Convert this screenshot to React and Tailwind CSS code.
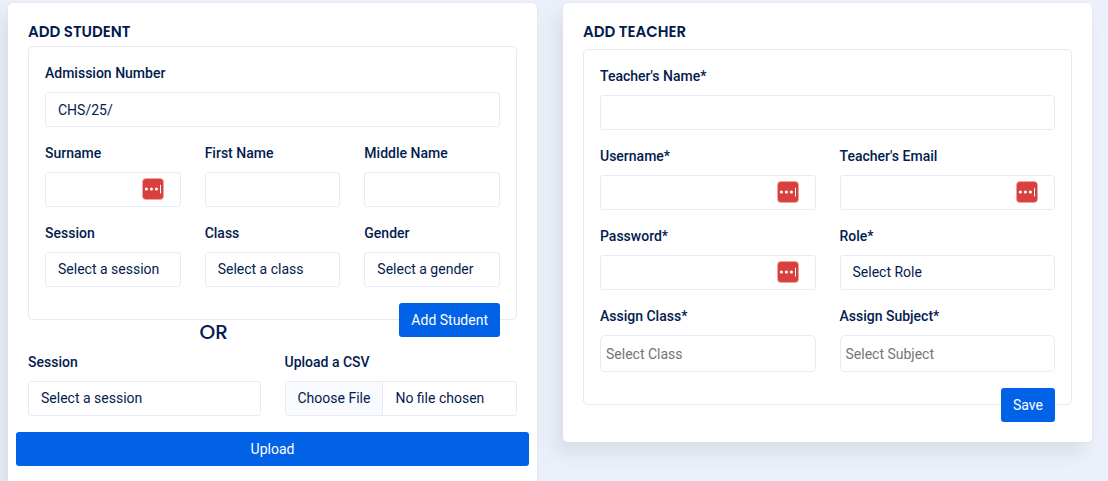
import React, { useState } from "react";

const labelClass = "block mb-2 font-medium";
const inputClass = "block w-full h-[35px] px-3 bg-white border border-[#e8ebf7] rounded-[3px] outline-none";
const selectClass = "block w-full h-[35px] px-3 bg-white border border-[#e8ebf7] rounded-[3px] outline-none appearance-none";
const searchClass =
    "block w-full h-[37px] px-[5px] bg-white border border-[#e8ebf7] rounded-[5px] outline-none placeholder:text-[#757575]";
const buttonClass = "h-[34px] px-3 bg-[#0162e8] text-white rounded-[3px] cursor-pointer";
const cardClass = "flow-root px-5 py-5 bg-white rounded-[5px] shadow-[-8px_12px_18px_0_#dadee8,0_0_0_1px_#e6e9f4]";
const titleClass = "font-['Poppins','Inter',sans-serif] text-[15px] leading-[18px] font-semibold uppercase";

// Password manager badge shown inside login fields
const KeyBadge = () => (
    <button type="button" aria-label="Fill from password manager" className="absolute right-[17px] top-[6px]">
        <svg width="22" height="22" viewBox="0 0 22 22" className="block">
            <rect x="0.5" y="0.5" width="21" height="21" rx="3.5" fill="#d93f3c" stroke="#eda8a6" strokeWidth="0.6" />
            <circle cx="4.4" cy="11" r="1.6" fill="#fff" />
            <circle cx="9.4" cy="11" r="1.6" fill="#fff" />
            <circle cx="14.4" cy="11" r="1.6" fill="#fff" />
            <rect x="18" y="6.8" width="1" height="8.6" fill="#fff" />
        </svg>
    </button>
);

const Label = ({ htmlFor, required, children }) => (
    <label htmlFor={htmlFor} className={labelClass}>
        {children}
        {required && <span>*</span>}
    </label>
);

const TextField = ({ id, label, required, badge, type = "text", value, onChange }) => (
    <div>
        <Label htmlFor={id} required={required}>{label}</Label>
        <div className="relative">
            <input id={id} type={type} className={inputClass} value={value} onChange={onChange} />
            {badge && <KeyBadge />}
        </div>
    </div>
);

const SelectField = ({ id, label, required, placeholder }) => (
    <div>
        <Label htmlFor={id} required={required}>{label}</Label>
        <select id={id} className={selectClass}>
            <option value="">{placeholder}</option>
        </select>
    </div>
);

const SearchField = ({ id, label, placeholder }) => (
    <div>
        <Label htmlFor={id} required>{label}</Label>
        <input id={id} type="text" className={searchClass} placeholder={placeholder} />
    </div>
);

const AddStudent = () => {
    const [admissionNumber, setAdmissionNumber] = useState("CHS/25/");

    return (
        <section className={cardClass}>
            <h3 className={titleClass}>Add Student</h3>
            <form className="mt-[5px] px-4 pt-4 border border-[#e8e8f1] rounded-[5px]">
                <div className="grid gap-4 pb-4">
                    <TextField
                        id="admissionNumber"
                        label="Admission Number"
                        value={admissionNumber}
                        onChange={(e) => setAdmissionNumber(e.target.value)}
                    />
                    <div className="grid grid-cols-3 gap-x-6 gap-y-4">
                        <TextField id="surname" label="Surname" badge />
                        <TextField id="firstName" label="First Name" />
                        <TextField id="middleName" label="Middle Name" />
                        <SelectField id="session" label="Session" placeholder="Select a session" />
                        <SelectField id="class" label="Class" placeholder="Select a class" />
                        <SelectField id="gender" label="Gender" placeholder="Select a gender" />
                    </div>
                </div>
                <button type="button" className={`${buttonClass} float-right`}>Add Student</button>
                <div className="h-4" />
            </form>
            <h4 className="mb-2 text-center font-['Poppins','Inter',sans-serif] text-[20px] leading-[24px] font-medium">
                OR
            </h4>
            <form className="clear-both">
                <div className="grid grid-cols-2 gap-6 pb-4">
                    <SelectField id="uploadSession" label="Session" placeholder="Select a session" />
                    <div>
                        <Label htmlFor="csv">Upload a CSV</Label>
                        <input
                            id="csv"
                            type="file"
                            accept=".csv"
                            className="block w-full h-[35px] border border-[#e8ebf7] rounded-[3px] file:h-[33px] file:px-3 file:mr-3 file:bg-[#f9fafe] file:border-0 file:border-r file:border-solid file:border-[#e8ebf7]"
                        />
                    </div>
                </div>
                <div className="-mx-3">
                    <button type="button" className={`${buttonClass} block w-full`}>Upload</button>
                </div>
            </form>
        </section>
    );
};

const AddTeacher = () => {
    return (
        <section className={cardClass}>
            <h3 className={titleClass}>Add Teacher</h3>
            <form className="mt-2 px-4 pt-4 border border-[#e8e8f1] rounded-[5px]">
                <div className="grid gap-4 pb-4">
                    <TextField id="teacherName" label="Teacher's Name" required />
                    <div className="grid grid-cols-2 gap-x-6 gap-y-4">
                        <TextField id="username" label="Username" required badge />
                        <TextField id="email" label="Teacher's Email" type="email" badge />
                        <TextField id="password" label="Password" type="password" required badge />
                        <SelectField id="role" label="Role" required placeholder="Select Role" />
                        <SearchField id="assignClass" label="Assign Class" placeholder="Select Class" />
                        <SearchField id="assignSubject" label="Assign Subject" placeholder="Select Subject" />
                    </div>
                </div>
                <button type="button" className={`${buttonClass} float-right`}>Save</button>
                <div className="h-4" />
            </form>
        </section>
    );
};

const App = () => {
    return (
        <main className="h-screen overflow-hidden pt-[3px] pl-2 pr-4 bg-[#ecf0fa] text-[#031b4e] font-['Roboto',sans-serif] text-[14px] leading-[21px]">
            <div className="grid grid-cols-2 gap-[26px] items-start">
                <AddStudent />
                <AddTeacher />
            </div>
        </main>
    );
};

export default App;
